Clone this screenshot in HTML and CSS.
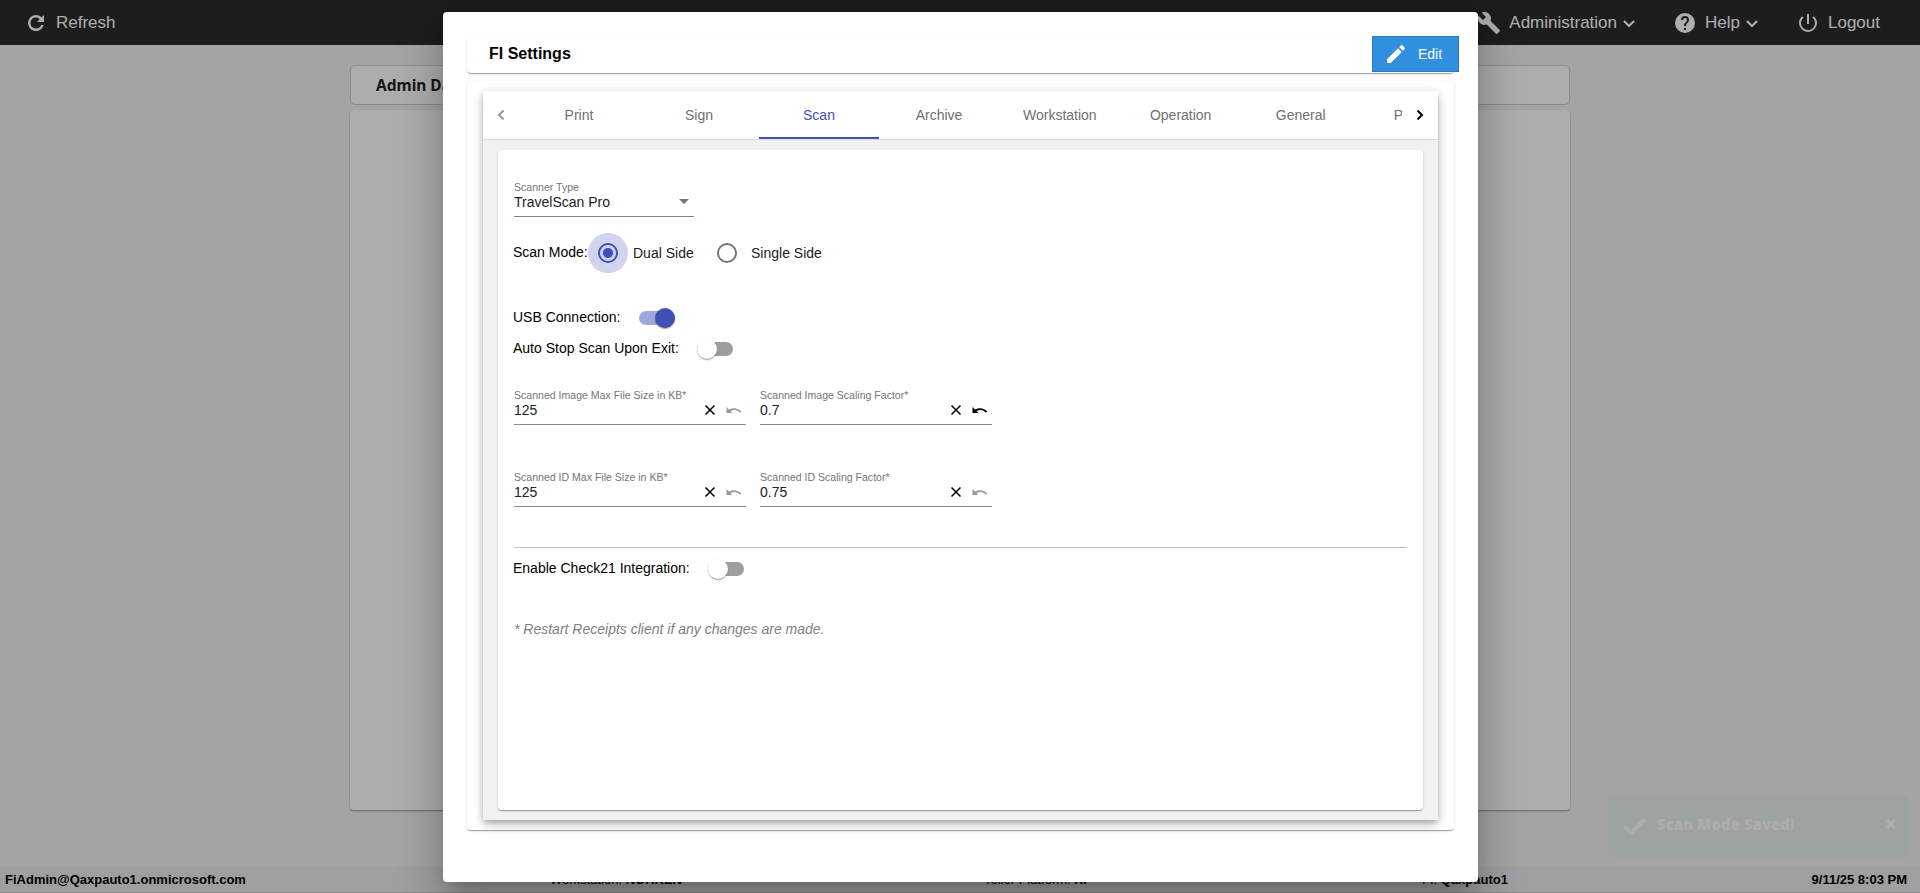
FILE: index.html
```html
<!DOCTYPE html>
<html lang="en">

<head>
    <meta charset="UTF-8">
    <meta name="viewport" content="width=device-width, initial-scale=1.0">
    <title>FI Settings</title>
    <link rel="stylesheet" href="styles.css">
</head>

<body>
    <div class="page">
        <header class="topbar">
            <a class="nav-item refresh">
                <svg viewBox="0 0 24 24"><path d="M17.65 6.35A7.96 7.96 0 0 0 12 4a8 8 0 1 0 7.73 10h-2.600A5.500 5.500 0 1 1 12 6.500c1.500 0 2.800.600 3.800 1.600L13 11h7V4z"/></svg>
                <span>Refresh</span>
            </a>
            <nav class="nav-right">
                <a class="nav-item admin">
                    <svg viewBox="0 0 24 24"><path d="M22.7 19l-9.1-9.1c.9-2.3.4-5-1.5-6.9-2-2-5-2.4-7.4-1.3L9 6 6 9 1.6 4.7C.4 7.1.9 10.1 2.9 12.1c1.9 1.9 4.6 2.4 6.9 1.5l9.1 9.1c.4.4 1 .4 1.4 0l2.3-2.3c.5-.4.5-1.1.1-1.4z"/></svg>
                    <span>Administration</span>
                    <svg class="caret" viewBox="0 0 14 10"><path d="M2 2l5 5 5-5"/></svg>
                </a>
                <a class="nav-item help">
                    <svg viewBox="0 0 24 24"><path d="M12 2a10 10 0 1 0 0 20 10 10 0 0 0 0-20zm1 17h-2v-2h2v2zm2.07-7.75l-.9.92C13.45 12.9 13 13.5 13 15h-2v-.5c0-1.1.45-2.1 1.17-2.83l1.24-1.26c.37-.36.59-.86.59-1.41a2 2 0 1 0-4 0H8a4 4 0 1 1 8 0c0 .88-.36 1.68-.93 2.25z"/></svg>
                    <span>Help</span>
                    <svg class="caret" viewBox="0 0 14 10"><path d="M2 2l5 5 5-5"/></svg>
                </a>
                <a class="nav-item logout">
                    <svg viewBox="0 0 24 24"><path d="M13 3h-2v10h2V3zm4.83 2.17l-1.42 1.42A6.92 6.92 0 0 1 19 12a7 7 0 1 1-11.42-5.42L6.17 5.17A8.93 8.93 0 0 0 3 12a9 9 0 0 0 18 0c0-2.74-1.23-5.18-3.17-6.83z"/></svg>
                    <span>Logout</span>
                </a>
            </nav>
        </header>
        <main class="dashboard">
            <h2 class="dashboard-title">Admin Dashboard</h2>
            <div class="dashboard-card"></div>
        </main>
        <footer class="statusbar">
            <b>FiAdmin@Qaxpauto1.onmicrosoft.com</b>
            <span>Workstation: <b>NORKEN</b></span>
            <span>Teller Platform: <b>XP</b></span>
            <span>FI: <b>Qaxpauto1</b></span>
            <b>9/11/25 8:03 PM</b>
        </footer>
    </div>

    <div class="toast">
        <svg class="toast-check" viewBox="0 0 24 18"><path d="M2 9l7 6L22 2"/></svg>
        <span>Scan Mode Saved!</span>
        <svg class="toast-close" viewBox="0 0 12 12"><path d="M2 2l8 8M10 2l-8 8"/></svg>
    </div>

    <div class="backdrop">
        <section class="modal">
            <div class="modal-header">
                <h1>FI Settings</h1>
                <button class="edit-btn">
                    <svg viewBox="0 0 24 24"><path d="M3 17.25V21h3.75L17.81 9.94l-3.75-3.75L3 17.25zM20.71 7.04a1 1 0 0 0 0-1.41l-2.34-2.34a1 1 0 0 0-1.41 0l-1.83 1.83 3.75 3.75 1.83-1.83z"/></svg>
                    <span>Edit</span>
                </button>
            </div>
            <div class="modal-card">
                <div class="tab-group">
                    <div class="tab-header">
                        <svg class="pager disabled" viewBox="0 0 8 12"><path d="M6.5 1.5L2 6l4.5 4.5"/></svg>
                        <div class="tabs">
                            <a class="tab">Print</a>
                            <a class="tab">Sign</a>
                            <a class="tab active">Scan</a>
                            <a class="tab">Archive</a>
                            <a class="tab">Workstation</a>
                            <a class="tab">Operation</a>
                            <a class="tab">General</a>
                            <a class="tab last">P</a>
                        </div>
                        <svg class="pager" viewBox="0 0 8 12"><path d="M1.5 1.5L6 6l-4.5 4.5"/></svg>
                    </div>
                    <div class="tab-body">
                        <div class="settings">
                            <div class="field select">
                                <label>Scanner Type</label>
                                <div class="field-row"><span class="value">TravelScan Pro</span><i class="arrow"></i></div>
                            </div>

                            <div class="row scan-mode">
                                <span>Scan Mode:</span>
                                <i class="ripple"><i class="radio checked"></i></i>
                                <span class="option">Dual Side</span>
                                <i class="radio"></i>
                                <span class="option single">Single Side</span>
                            </div>

                            <div class="row usb"><span>USB Connection:</span><i class="toggle on"></i></div>
                            <div class="row auto-stop"><span>Auto Stop Scan Upon Exit:</span><i class="toggle"></i></div>

                            <div class="fields">
                                <div class="field">
                                    <label>Scanned Image Max File Size in KB*</label>
                                    <div class="field-row">
                                        <span class="value">125</span>
                                        <svg class="clear" viewBox="0 0 12 12"><path d="M1.5 1.5l9 9M10.5 1.5l-9 9"/></svg>
                                        <svg class="undo disabled" viewBox="0 0 16 8"><path d="M.5 1v6h6L4.5 5.2C7.500 3.500 11 3.500 13.500 6.500l1.900-.7C12.500 1.800 7 1.200 3 3.500z"/></svg>
                                    </div>
                                </div>
                                <div class="field">
                                    <label>Scanned Image Scaling Factor*</label>
                                    <div class="field-row">
                                        <span class="value">0.7</span>
                                        <svg class="clear" viewBox="0 0 12 12"><path d="M1.5 1.5l9 9M10.5 1.5l-9 9"/></svg>
                                        <svg class="undo" viewBox="0 0 16 8"><path d="M.5 1v6h6L4.5 5.2C7.500 3.500 11 3.500 13.500 6.500l1.900-.7C12.500 1.800 7 1.200 3 3.500z"/></svg>
                                    </div>
                                </div>
                                <div class="field">
                                    <label>Scanned ID Max File Size in KB*</label>
                                    <div class="field-row">
                                        <span class="value">125</span>
                                        <svg class="clear" viewBox="0 0 12 12"><path d="M1.5 1.5l9 9M10.5 1.5l-9 9"/></svg>
                                        <svg class="undo disabled" viewBox="0 0 16 8"><path d="M.5 1v6h6L4.5 5.2C7.500 3.500 11 3.500 13.500 6.500l1.900-.7C12.500 1.800 7 1.200 3 3.500z"/></svg>
                                    </div>
                                </div>
                                <div class="field">
                                    <label>Scanned ID Scaling Factor*</label>
                                    <div class="field-row">
                                        <span class="value">0.75</span>
                                        <svg class="clear" viewBox="0 0 12 12"><path d="M1.5 1.5l9 9M10.5 1.5l-9 9"/></svg>
                                        <svg class="undo disabled" viewBox="0 0 16 8"><path d="M.5 1v6h6L4.5 5.2C7.500 3.500 11 3.500 13.500 6.500l1.900-.7C12.500 1.800 7 1.200 3 3.500z"/></svg>
                                    </div>
                                </div>
                            </div>

                            <hr>
                            <div class="row check21"><span>Enable Check21 Integration:</span><i class="toggle"></i></div>
                            <p class="note">* Restart Receipts client if any changes are made.</p>
                        </div>
                    </div>
                </div>
            </div>
        </section>
    </div>
</body>

</html>
```
FILE: styles.css
```css
* {
    box-sizing: border-box;
}
body {
    margin: 0;
    height: 893px;
    overflow: hidden;
    font-family: "Liberation Sans", Arial, sans-serif;
    font-size: 14px;
    color: #000;
}
svg {
    fill: currentColor;
    flex: none;
}

/* page behind the dialog */
.page {
    height: 893px;
    display: flex;
    flex-direction: column;
    background: #f2f2f2;
}
.topbar {
    height: 45px;
    flex: none;
    background: #2c2c2c;
    color: #fff;
    display: flex;
    justify-content: space-between;
    padding: 0 40px 0 24px;
}
.nav-right {
    display: flex;
}
.nav-item {
    display: flex;
    align-items: center;
    height: 45px;
    font-size: 17px;
}
.nav-item svg {
    width: 24px;
    height: 24px;
    margin-right: 8px;
}
.nav-item .caret {
    width: 14px;
    height: 10px;
    margin: 2px 0 0 5px;
    fill: none;
    stroke: currentColor;
    stroke-width: 2.2;
}
.admin, .help {
    margin-right: 37px;
}
.dashboard {
    width: 1220px;
    margin: 20px auto 0;
    flex: 1;
}
.dashboard-title {
    height: 40px;
    margin: 0 0 5px;
    padding: 0 25px;
    border: 1px solid #d0d0d0;
    border-radius: 5px;
    background: #fff;
    font: bold 15.5px/38px "Noto Sans", "Open Sans", sans-serif;
    color: #222;
}
.dashboard-card {
    height: 700px;
    border-radius: 4px;
    background: #fff;
    box-shadow: 0 1px 2px rgba(0, 0, 0, .4);
}
.statusbar {
    height: 26px;
    flex: none;
    display: grid;
    grid-template-columns: 545px 434px 438px 1fr auto;
    align-items: center;
    padding: 0 13px 1px 5px;
    background: #e8eaec;
    border-bottom: 1px solid #ccc;
    font-size: 13px;
}

.toast {
    position: absolute;
    left: 1608px;
    top: 797px;
    width: 300px;
    height: 60px;
    display: flex;
    align-items: center;
    padding: 0 11px 6px 14px;
    border-radius: 3px;
    background: #e8f1eb;
    color: #fff;
    font: 800 15px "Open Sans", "Noto Sans", sans-serif;
}
.toast span {
    flex: 1;
    margin-left: 10px;
}
.toast svg {
    fill: none;
    stroke: currentColor;
}
.toast-check {
    width: 25px;
    height: 19px;
    margin-top: 5px;
    stroke-width: 4;
}
.toast-close {
    width: 12px;
    height: 12px;
    stroke-width: 3;
}

/* dialog */
.backdrop {
    position: absolute;
    top: 0;
    left: 0;
    width: 1920px;
    height: 893px;
    display: flex;
    justify-content: center;
    overflow: hidden;
    background: rgba(0, 0, 0, .32);
}
.modal {
    width: 1035px;
    height: 870px;
    margin: 12px 0 0 1px;
    padding: 24px;
    border-radius: 4px;
    background: #fff;
    box-shadow: 0 11px 15px -7px rgba(0, 0, 0, .2), 0 24px 38px 3px rgba(0, 0, 0, .14), 0 9px 46px 8px rgba(0, 0, 0, .12);
}
.modal-header, .modal-card, .settings {
    border-radius: 4px;
    background: #fff;
    box-shadow: 0 2px 1px -1px rgba(0, 0, 0, .2), 0 1px 1px rgba(0, 0, 0, .14), 0 1px 3px rgba(0, 0, 0, .12);
}
.modal-header {
    width: 987px;
    height: 37px;
    display: flex;
    justify-content: space-between;
    padding-left: 22px;
    margin-bottom: 8px;
}
.modal-header h1 {
    margin: 0;
    font-size: 16px;
    line-height: 35px;
}
.edit-btn {
    width: 87px;
    height: 36px;
    margin-right: -5px;
    flex: none;
    display: flex;
    align-items: center;
    padding: 0 0 1px 11px;
    border: 1px solid #2a7cc2;
    background: #308fdf;
    color: #fff;
    font: 14px "Liberation Sans", Arial, sans-serif;
}
.edit-btn svg {
    width: 24px;
    height: 24px;
    margin: 1px 10px 0 0;
}
.modal-card {
    width: 987px;
    height: 749px;
    padding: 10px 16px;
}
.tab-group {
    width: 955px;
    height: 729px;
    background: #f1f1f1;
    box-shadow: 0 3px 5px -1px rgba(0, 0, 0, .2), 0 6px 10px rgba(0, 0, 0, .14), 0 1px 10px rgba(0, 0, 0, .12);
}
.tab-header {
    height: 49px;
    display: flex;
    background: #fff;
    border-bottom: 1px solid #dcdcdc;
}
.pager {
    width: 8px;
    height: 12px;
    margin: 18px 14px 0;
    fill: none;
    stroke: currentColor;
    stroke-width: 2;
}
.pager.disabled {
    color: #999;
}
.tabs {
    width: 883px;
    display: flex;
    overflow: hidden;
}
.tab {
    min-width: 120px;
    flex: none;
    padding: 0 24px;
    line-height: 48px;
    text-align: center;
    color: #707070;
}
.tab.active {
    color: #3f51b5;
    border-bottom: 2px solid #3f51b5;
}
.tab.last {
    padding-left: 33px;
    text-align: left;
}
.tab-body {
    padding: 10px 15px;
}
.settings {
    height: 660px;
    padding: 31px 16px;
}

.field {
    width: 232px;
    height: 36px;
    border-bottom: 1px solid #8b8b8b;
}
.field label {
    display: block;
    height: 12px;
    font-size: 10.55px;
    line-height: 12px;
    color: #757575;
    white-space: nowrap;
}
.field-row {
    display: flex;
    align-items: center;
    height: 18px;
}
.value {
    flex: 1;
    color: #222;
}
.select {
    width: 180px;
    border-color: #82829a;
}
.arrow {
    margin: -2px 5px 0 0;
    border: 5px solid transparent;
    border-top-color: #757575;
    border-bottom: 0;
}
.clear {
    width: 12px;
    height: 12px;
    margin-right: 10px;
    fill: none;
    stroke: currentColor;
    stroke-width: 1.5;
}
.undo {
    width: 16px;
    height: 8px;
    margin-right: 4px;
}
.undo.disabled {
    color: #999;
}
.row {
    display: flex;
    align-items: center;
    height: 20px;
    margin-left: -1px;
    white-space: nowrap;
}
.scan-mode {
    height: 40px;
    margin: 16px 0 34px -1px;
}
.ripple {
    width: 40px;
    height: 40px;
    display: flex;
    align-items: center;
    justify-content: center;
    border-radius: 50%;
    background: #d1d4ed;
}
.scan-mode > span:first-child {
    width: 75px;
    margin-top: -2px;
}
.radio {
    width: 20px;
    height: 20px;
    border: 2px solid #757575;
    border-radius: 50%;
}
.radio.checked {
    border-color: #3f51b5;
    background: radial-gradient(circle, #3f51b5 4.6px, transparent 5.4px);
}
.option {
    width: 89px;
    padding-left: 5px;
    color: #222;
}
.option.single {
    padding-left: 14px;
    width: auto;
}
.toggle {
    position: relative;
    width: 36px;
    height: 14px;
    margin: 1px 0 0 18px;
    border-radius: 8px;
    background: #9e9e9e;
}
.toggle::after {
    content: "";
    position: absolute;
    left: 0;
    top: -3px;
    width: 20px;
    height: 20px;
    border-radius: 50%;
    background: #fff;
    box-shadow: 0 2px 1px -1px rgba(0, 0, 0, .2), 0 1px 1px rgba(0, 0, 0, .14), 0 1px 3px rgba(0, 0, 0, .12);
}
.toggle.on {
    margin-left: 19px;
    background: #9fa8da;
}
.toggle.on::after {
    left: 16px;
    background: #3f51b5;
}
.auto-stop {
    margin-top: 11px;
}
.fields {
    display: grid;
    grid-template-columns: 232px 232px;
    gap: 46px 14px;
    margin-top: 31px;
}
hr {
    height: 1px;
    margin: 40px 0 10px;
    border: 0;
    background: #bdbdbd;
}
.note {
    margin: 43px 0 0;
    font-style: italic;
    color: #808080;
}
```
